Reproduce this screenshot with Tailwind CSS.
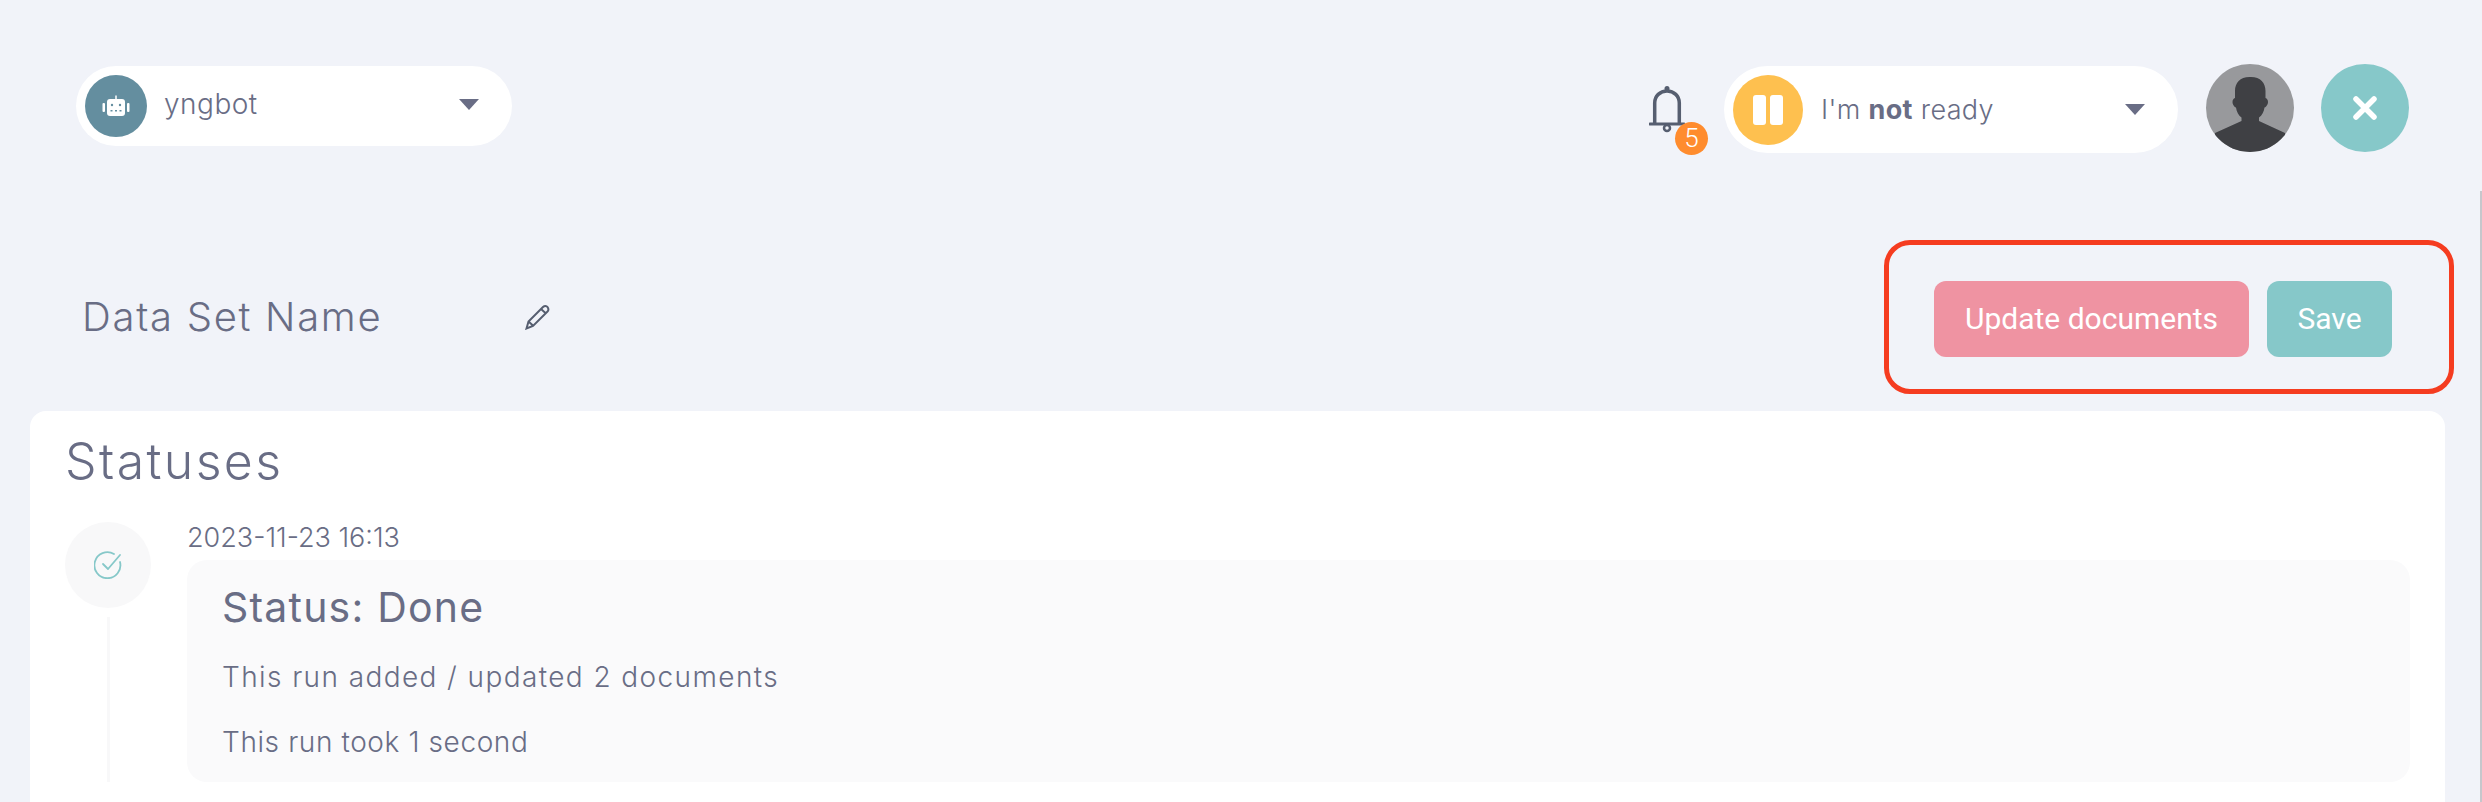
<!DOCTYPE html>
<html>
<head>
<meta charset="utf-8">
<script src="https://cdn.jsdelivr.net/npm/@tailwindcss/browser@4"></script>
</head>
<body class="w-[2482px] h-[802px] overflow-hidden bg-[#f1f3f9] text-[#696d85] font-['Inter',sans-serif] font-light relative">
  <div class="absolute right-0 top-[191px] bottom-0 w-[2px] bg-[#c6c7cc]"></div>
  <header class="flex justify-between items-start pt-[64px] pl-[76px] pr-[73px]">
    <div class="mt-[2px] w-[436px] h-[80px] rounded-full bg-white flex items-center pl-[9px] pr-[33px]">
      <div class="w-[62px] h-[62px] rounded-full bg-[#648e9f] flex items-center justify-center">
        <svg width="28" height="22" viewBox="0 0 28 22" fill="#fff"><rect x="5" y="4" width="18" height="17" rx="3"/><rect x="13.250" y="0.500" width="1.500" height="4"/><rect x="0.500" y="8" width="2.500" height="9" rx="1"/><rect x="25" y="8" width="2.500" height="9" rx="1"/><g fill="#648e9f"><circle cx="10" cy="10" r="1.200"/><circle cx="18" cy="10" r="1.200"/><rect x="8.500" y="15" width="2" height="1.500"/><rect x="13" y="15" width="2" height="1.500"/><rect x="17.500" y="15" width="2" height="1.500"/></g></svg>
      </div>
      <span class="ml-[17px] -mt-[5px] text-[28px] tracking-[0.5px] flex-1">yngbot</span>
      <span class="w-0 h-0 -mt-[3px] border-x-[10px] border-x-transparent border-t-[11px] border-t-[#696d85]"></span>
    </div>
    <div class="flex items-start">
      <div class="relative w-[61px] h-[88px] mr-[14px]">
        <svg class="absolute left-0 top-[22px]" width="36" height="47" viewBox="0 0 36 47" fill="none" stroke="#565e70" stroke-width="3.500" stroke-linecap="round"><circle cx="18" cy="2.500" r="2.500" fill="#565e70" stroke="none"/><path d="M5.700 37V17C5.700 10 11 5 18 5s12.300 5 12.300 12v20"/><path d="M1 38h34" stroke-width="3"/><circle cx="18" cy="42" r="3" stroke-width="2.500"/></svg>
        <span class="absolute left-[26px] top-[58px] w-[33px] h-[33px] rounded-full bg-[#ff8c2e] text-white font-['Roboto',sans-serif] text-[26px] leading-[33px] text-center">5</span>
      </div>
      <div class="mt-[2px] w-[454px] h-[87px] rounded-full bg-white flex items-center pl-[9px] pr-[33px]">
        <div class="w-[70px] h-[70px] rounded-full bg-[#fec04f] flex items-center justify-center gap-[4px]">
          <span class="w-[13px] h-[30px] rounded-[3px] bg-white"></span>
          <span class="w-[13px] h-[30px] rounded-[3px] bg-white"></span>
        </div>
        <span class="ml-[18px] mt-[2px] text-[27px] tracking-[0.350px] flex-1">I'm <b class="font-bold">not</b> ready</span>
        <span class="w-0 h-0 border-x-[10px] border-x-transparent border-t-[11px] border-t-[#696d85]"></span>
      </div>
      <div class="ml-[28px] w-[88px] h-[88px] rounded-full bg-[#98999c] overflow-hidden">
        <svg width="88" height="88" viewBox="0 0 88 88" fill="#3f4044"><path d="M43.500 13c-9.500 0-14.500 6-14.500 14v7c-1.500 .5-2.500 2-2.500 4s1.500 5 3.500 5.500c.5 4 2.500 8 5.500 10V57L9 69v19h70V69L53 57v-3.500c3-2 5-6 5.500-10 2-.5 3.500-3.500 3.500-5.500s-1-3.500-2.500-4v-7c0-8-5-14-14.500-14z"/></svg>
      </div>
      <div class="ml-[27px] w-[88px] h-[88px] rounded-full bg-[#86c8c9] flex items-center justify-center">
        <svg width="24" height="24" viewBox="0 0 24 24" fill="none" stroke="#fff" stroke-width="5.500" stroke-linecap="round"><path d="M3 3l18 18M21 3L3 21"/></svg>
      </div>
    </div>
  </header>
  <section class="mt-[87px] pl-[82px] pr-[28px] flex justify-between items-center">
    <div class="flex items-center">
      <h1 class="w-[443px] text-[40px] tracking-[1.700px]">Data Set Name</h1>
      <svg width="26" height="26" viewBox="0 0 26 26" fill="none" stroke="#565e70" stroke-width="2"><path d="M1.500 24.500l2-7L18 3c1.500-1.500 3.500-1.500 4.500 0s1.500 3 0 4.500L8 22zM3.500 17.500l5 4.500M16 5l5 4.500"/></svg>
    </div>
    <div class="w-[570px] h-[154px] rounded-[26px] border-[5px] border-[#f53c20] flex items-center pl-[45px] pt-[3px] gap-[18px] font-['Roboto',sans-serif] text-white text-[30px] font-normal">
      <button class="w-[315px] h-[76px] rounded-[12px] bg-[#ef93a2]">Update documents</button>
      <button class="w-[125px] h-[76px] rounded-[12px] bg-[#86c8c9]">Save</button>
    </div>
  </section>
  <main class="mt-[17px] ml-[30px] mr-[37px] h-[500px] rounded-t-[16px] bg-white pl-[35px] pr-[35px]">
    <h2 class="pt-[22px] text-[50px] tracking-[2.400px] leading-[56px]">Statuses</h2>
    <div class="flex mt-[33px]">
      <div class="w-[86px] flex flex-col items-center">
        <div class="w-[86px] h-[86px] rounded-full bg-[#f8f8f9] flex items-center justify-center">
          <svg width="28" height="28" viewBox="0 0 28 28" fill="none" stroke="#86c8c9" stroke-width="1.800" stroke-linecap="round" stroke-linejoin="round"><path d="M26 11a13 13 0 1 1-6-8"/><path d="M9 13l5 5L26 4"/></svg>
        </div>
        <div class="mt-[9px] w-[3px] h-[165px] bg-[#f8f8f9]"></div>
      </div>
      <div class="ml-[36px] flex-1">
        <p class="text-[27px] leading-[32px]">2023-11-23 16:13</p>
        <div class="mt-[6px] h-[222px] rounded-[20px] bg-[#fafafb] pl-[35px] pt-[20px]">
          <h3 class="text-[41px] tracking-[1.200px] leading-[54px] font-normal">Status: Done</h3>
          <p class="mt-[25px] text-[28px] tracking-[1.400px] leading-[36px]">This run added / updated 2 documents</p>
          <p class="mt-[29px] text-[28px] tracking-[0.600px] leading-[36px]">This run took 1 second</p>
        </div>
      </div>
    </div>
  </main>
</body>
</html>
